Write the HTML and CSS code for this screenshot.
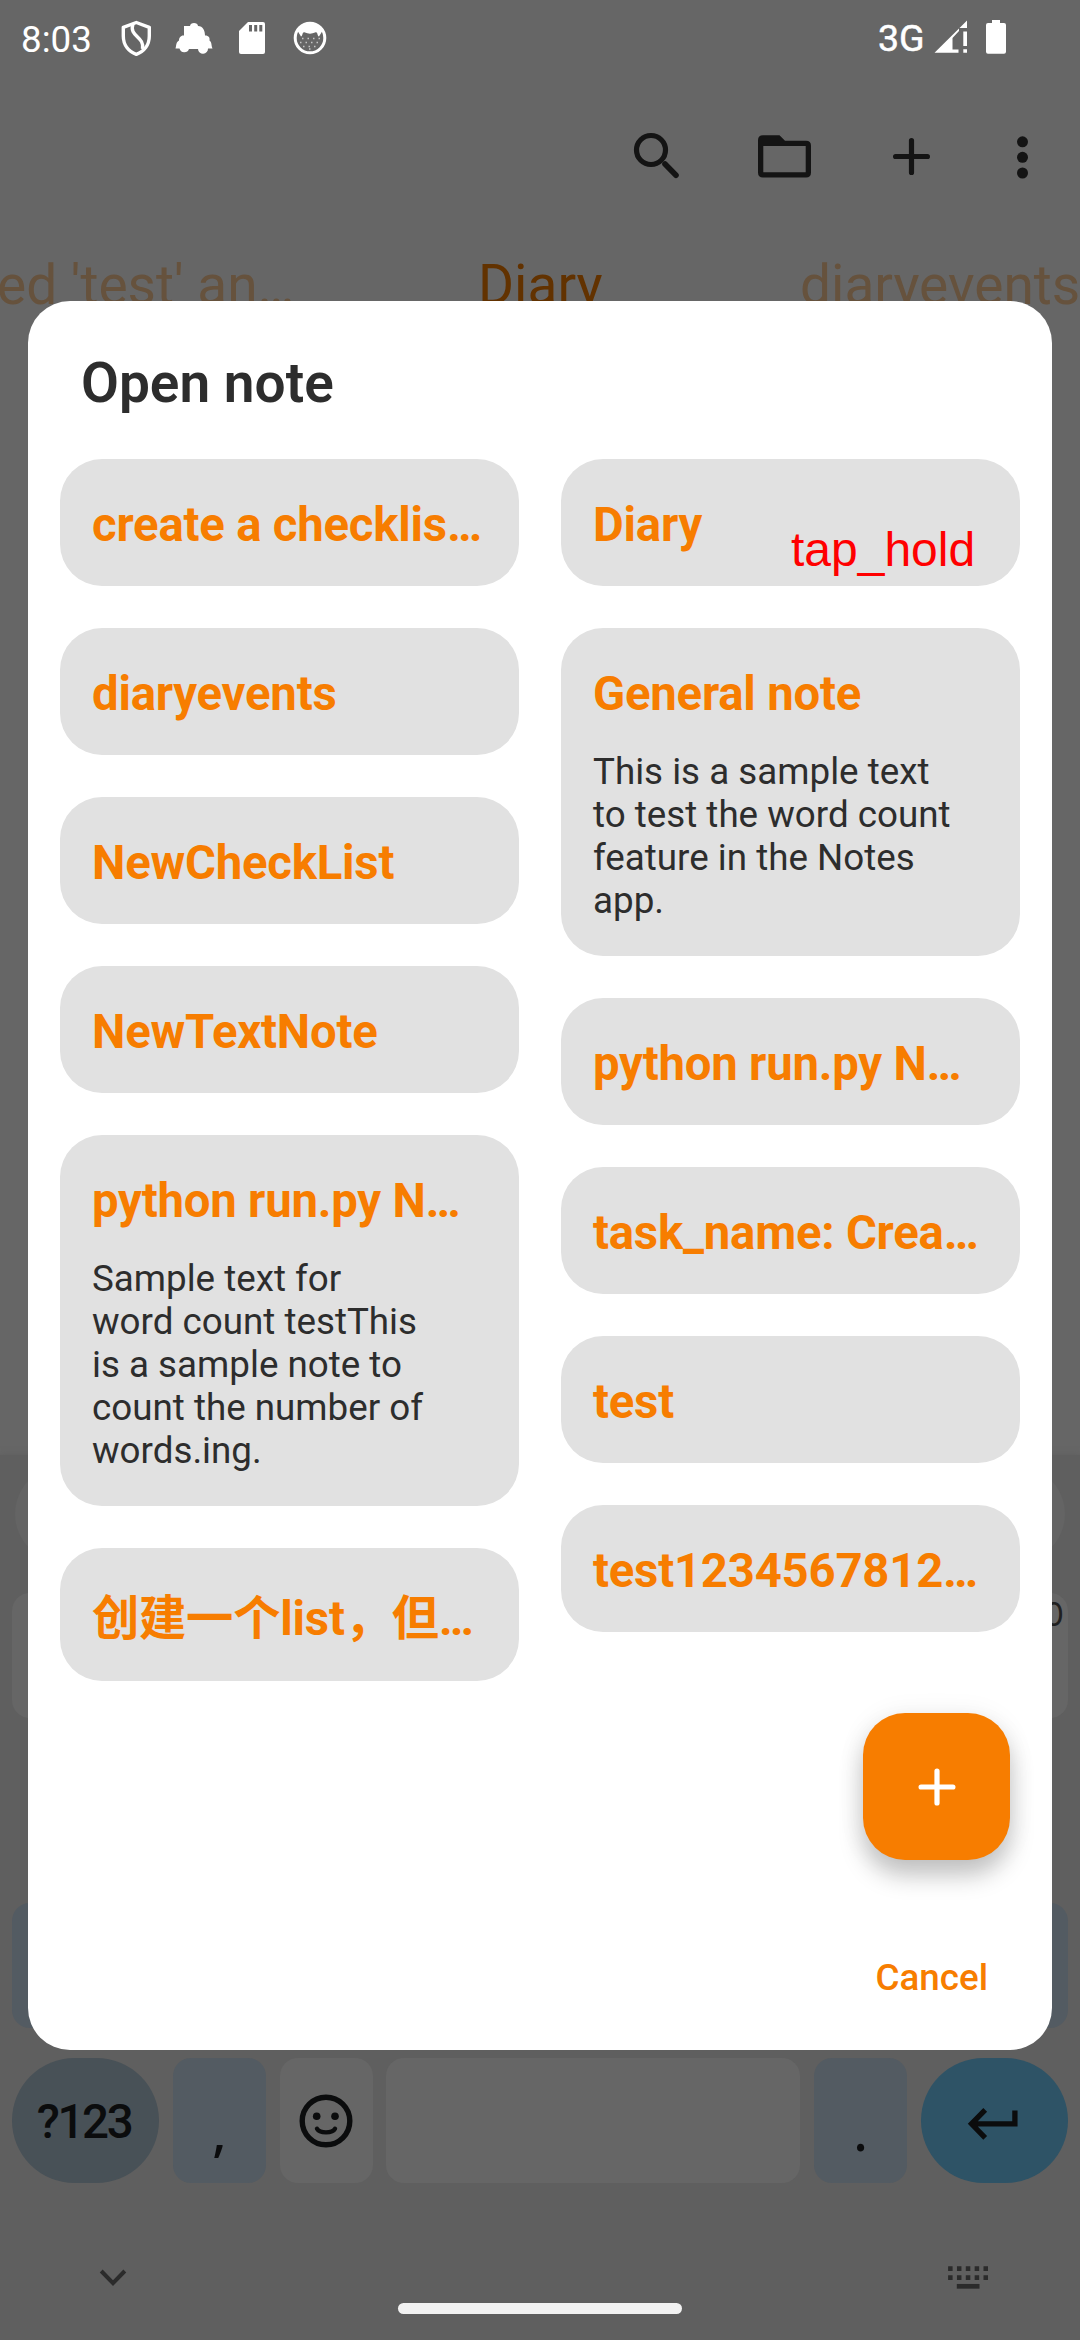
FILE: index.html
```html
<!DOCTYPE html>
<html lang="en">
<head>
<meta charset="utf-8">
<title>Open note</title>
<link rel="stylesheet" href="styles.css">
</head>
<body>
<div class="screen">
  <header class="status">
    <span class="clock">8:03</span>
    <svg class="status-icon" width="48" height="80" viewBox="112 0 48 80" fill="none" stroke="#fff" stroke-width="3.4" stroke-linejoin="round"><path d="M136.3 22.5L149.3 27.3V36C149.3 45 144 51.500 136.300 54.300C128.600 51.500 123.300 45 123.300 36V27.300Z"/><path d="M133 24C128.500 36.500 145 36.500 142.500 49"/></svg>
    <svg class="status-icon" width="48" height="80" viewBox="170 0 48 80" fill="#fff"><path d="M184 26H190C190 22 198 22 198 26C203 26 205 31 205 35.500C209 35.500 210 38 209.500 40.500C212 42 211 45 212.500 48.500H208A5 5 0 0 1 198 49H189A5 5 0 0 1 179.500 48.500H175.500C176.500 45 176 42 179 40.500C179 37.500 181 35 184 35.500Z"/></svg>
    <svg class="status-icon" width="48" height="80" viewBox="228 0 48 80"><path fill="#fff" d="M248 22H263Q265 22 265 24V52Q265 54 263 54H241Q239 54 239 52V31Z"/><path stroke="#666" stroke-width="3" d="M250.500 25V31.500M255.700 25V31.500M260.800 25V31.500"/></svg>
    <svg class="status-icon" width="48" height="80" viewBox="286 0 48 80"><circle cx="310" cy="38" r="14.800" fill="none" stroke="#fff" stroke-width="3"/><path fill="#fff" d="M297 30C301 22 319 22 323 30L319 36.500C317 36 318 31 315 32.500C312 34 308 34 305 32.500C302 31 303 36 301 36.500Z"/><path stroke="#c4c4c4" stroke-width="1.500" stroke-dasharray="1.500 4" d="M302 38.500H320M300 42.500H321M303 46.500H318M309 49H314"/></svg>
    <span class="network">3G</span>
    <svg width="40" height="80" viewBox="930 0 40 80" fill="#fff"><path d="M934.500 52.700L959 28.500V31L952.500 38V49.500H958.500V52.700ZM967 20.500V28H959.500ZM963.300 31.500H967V46H963.300ZM963.300 49.300H967V52.700H963.300Z"/></svg>
    <svg width="40" height="80" viewBox="976 0 40 80" fill="#fff"><path d="M992 20H1000V23H1004Q1006 23 1006 25V51.700Q1006 53.700 1004 53.700H988Q986 53.700 986 51.700V25Q986 23 988 23H992Z"/></svg>
  </header>

  <nav class="toolbar">
    <svg class="tool" width="60" height="60" viewBox="626 126 60 60" fill="none" stroke="#141414" stroke-width="5.200" stroke-linecap="round"><circle cx="651" cy="150" r="14.500"/><path d="M665 164L676 175.300" stroke-width="5.600"/></svg>
    <svg class="tool tool-folder" width="60" height="60" viewBox="755 126 60 60"><path fill="#141414" fill-rule="evenodd" d="M763 135.300H779.500L785 140.700H806Q811 140.700 811 145.700V172.500Q811 177.500 806 177.500H763Q758 177.500 758 172.500V140.300Q758 135.300 763 135.300ZM763.300 146V172.200H805.700V146Z"/></svg>
    <svg class="tool tool-add" width="60" height="60" viewBox="882 126 60 60" stroke="#141414" stroke-width="5.200" stroke-linecap="round"><path d="M911.500 140.600V172.400M895.600 156.500H927.400"/></svg>
    <svg class="tool tool-more" width="60" height="60" viewBox="993 126 60 60" fill="#141414"><circle cx="1022.500" cy="141.800" r="5.500"/><circle cx="1022.500" cy="157.300" r="5.500"/><circle cx="1022.500" cy="173" r="5.500"/></svg>
  </nav>

  <div class="tabs">
    <span class="tab tab-prev">ed 'test' an…</span>
    <span class="tab tab-current">Diary</span>
    <span class="tab">diaryevents</span>
  </div>

  <section class="keyboard">
    <div class="suggestions"></div>
    <div class="key-row">
      <div class="key"></div>
      <div class="key key-p">0</div>
    </div>
    <div class="key-row key-row-shift">
      <div class="key key-alt"></div>
      <div class="key key-alt"></div>
    </div>
    <div class="key-row key-row-bottom">
      <div class="key key-symbols">?123</div>
      <div class="key key-alt key-punct">,</div>
      <div class="key key-emoji">
        <svg width="60" height="60" viewBox="295.500 2090.500 60 60" fill="none" stroke="#0b0c0d" stroke-linecap="round"><circle cx="325.500" cy="2120.500" r="23.800" stroke-width="5.400"/><path stroke-width="4.400" d="M316.500 2128.300C319 2133 332 2133 334.500 2128.300"/><g fill="#0b0c0d" stroke="none"><circle cx="316.200" cy="2115.700" r="3.800"/><circle cx="334.500" cy="2115.700" r="3.800"/></g></svg>
      </div>
      <div class="key key-space"></div>
      <div class="key key-alt key-punct">.</div>
      <div class="key key-enter">
        <svg width="60" height="60" viewBox="964.500 2090.500 60 60" fill="none" stroke="#0b0c0d" stroke-width="5.300"><path d="M1015.400 2110V2123.300H972M985.700 2109.300L972 2123.300L985.700 2137.300"/></svg>
      </div>
    </div>
    <div class="ime-bar">
      <svg width="40" height="40" viewBox="93 2256 40 40" fill="none" stroke="#2b2b2b" stroke-width="4"><path d="M101.200 2271L113 2283.200L124.800 2271"/></svg>
      <svg width="48" height="40" viewBox="943.500 2256 48 40" stroke="#2b2b2b" stroke-width="4.700"><path stroke-dasharray="4.500 4.350" d="M947.600 2268.700H988M947.600 2277.600H988"/><path d="M956.300 2286.300H979"/></svg>
    </div>
    <div class="home-bar"></div>
  </section>
</div>

<main class="dialog">
  <h1 class="dialog-title">Open note</h1>
  <div class="notes">
    <div class="column">
      <article class="note"><h2 class="note-title">create a checklis…</h2></article>
      <article class="note"><h2 class="note-title">diaryevents</h2></article>
      <article class="note"><h2 class="note-title">NewCheckList</h2></article>
      <article class="note"><h2 class="note-title">NewTextNote</h2></article>
      <article class="note"><h2 class="note-title">python run.py N…</h2><p class="note-text">Sample text for<br>word count testThis<br>is a sample note to<br>count the number of<br>words.ing.</p></article>
      <article class="note note-cjk"><h2 class="note-title" lang="zh-CN">创建一个list，但…</h2></article>
    </div>
    <div class="column">
      <article class="note"><h2 class="note-title">Diary</h2><span class="gesture">tap_hold</span></article>
      <article class="note"><h2 class="note-title">General note</h2><p class="note-text">This is a sample text<br>to test the word count<br>feature in the Notes<br>app.</p></article>
      <article class="note"><h2 class="note-title">python run.py N…</h2></article>
      <article class="note"><h2 class="note-title">task_name: Crea…</h2></article>
      <article class="note"><h2 class="note-title">test</h2></article>
      <article class="note"><h2 class="note-title">test1234567812…</h2></article>
    </div>
  </div>
  <button class="fab" aria-label="New note"><svg width="42" height="42" viewBox="-21 -21 42 42" stroke="#fff" stroke-width="5.200" stroke-linecap="round"><path d="M0 -15.900V15.900M-15.900 0H15.900"/></svg></button>
  <footer class="actions"><button class="cancel">Cancel</button></footer>
</main>
</body>
</html>
```
FILE: styles.css
```css
* { box-sizing: border-box; margin: 0; padding: 0; }
svg { display: block; flex: none; }
button { border: 0; background: none; font: inherit; }

body {
  position: relative;
  width: 1080px;
  height: 2340px;
  overflow: hidden;
  font-family: Roboto, "Noto Sans CJK SC", sans-serif;
}

.screen {
  display: flex;
  flex-direction: column;
  height: 2340px;
  background: #666;
}

.status {
  display: flex;
  height: 80px;
  padding-left: 21px;
  color: #fff;
  font-size: 36.75px;
  line-height: 79px;
}
.clock { width: 91px; }
.status-icon { margin-right: 10px; }
.network { width: 52px; margin-left: 534px; font-size: 37.5px; -webkit-text-stroke: 0.5px #fff; line-height: 76px; }
.status svg:last-child { margin-left: 6px; }

.toolbar { display: flex; height: 172px; padding: 46px 0 0 626px; }
.tool-folder { margin-left: 69px; }
.tool-add { margin-left: 67px; }
.tool-more { margin-left: 51px; }

.tabs {
  display: grid;
  grid-template-columns: 478px 322px 280px;
  font-size: 55px;
  line-height: 66px;
  white-space: nowrap;
  color: #66523d;
}
.tab-prev { margin-left: -3px; }
.tab-current { color: #623200; }

.keyboard {
  display: flex;
  flex-direction: column;
  height: 885px;
  margin-top: auto;
  padding: 11px 12px 0;
  background: #5f5f5f;
  box-shadow: 0 0 6px #5f5f5f;
  color: #0b0c0d;
}
.suggestions { height: 96px; margin: 0 3px 31px; border-radius: 48px; background: #646464; }
.key-row { display: flex; justify-content: space-between; height: 125px; }
.key-row-shift { margin-top: 185px; }
.key-row-bottom { margin-top: 30px; }
.key {
  display: flex;
  align-items: center;
  justify-content: center;
  width: 93px;
  border-radius: 18px;
  background: #666;
}
.key-p {
  align-items: flex-start;
  justify-content: flex-end;
  padding: 3px 4px 0 0;
  font: 32px/38px Inter, sans-serif;
  color: #202020;
}
.key-alt { background: #535b62; }
.key-symbols {
  width: 147px;
  padding: 2px 3px 0 0;
  border-radius: 62.5px;
  background: #485157;
  font-size: 47.5px;
  font-weight: 500;
  letter-spacing: -2.4px;
}
.key-punct { padding-top: 21px; font: 500 52px/60px "Noto Sans", sans-serif; }
.key-space { width: 414px; }
.key-enter { width: 147px; border-radius: 62.5px; background: #2e5366; }
.ime-bar {
  display: flex;
  justify-content: space-between;
  margin-top: 73px;
  padding: 0 76px 0 81px;
}
.home-bar { width: 284px; height: 11px; margin: 7px auto 0; border-radius: 5.5px; background: #f2f2f2; }

.dialog {
  position: absolute;
  left: 28px;
  top: 301px;
  display: flex;
  flex-direction: column;
  width: 1024px;
  height: 1749px;
  padding: 0 32px;
  border-radius: 42px;
  background: #fff;
}
.dialog-title {
  height: 158px;
  padding: 50px 0 0 21px;
  font-size: 55px;
  font-weight: 600;
  line-height: 64px;
  color: #2d2d2d;
}
.notes { display: grid; grid-template-columns: 459px 459px; gap: 42px; }
.column { display: flex; flex-direction: column; gap: 42px; }
.note {
  position: relative;
  padding: 35px 32px 29px;
  border-radius: 42px;
  background: #e1e1e1;
}
.note-title {
  font-size: 47.25px;
  font-weight: 700;
  line-height: 63px;
  letter-spacing: -0.2px;
  white-space: nowrap;
  color: #f77d00;
}
.note-cjk { padding-bottom: 30px; padding-top: 40px; }
.note-text {
  padding: 24px 0 5px;
  font-size: 36.75px;
  line-height: 43px;
  color: #2d2d2d;
}
.gesture {
  position: absolute;
  left: 230px;
  top: 63px;
  font: 48px/55px "Liberation Sans", Arial, sans-serif;
  color: #f00;
}
.fab {
  position: absolute;
  right: 42px;
  bottom: 190px;
  display: flex;
  align-items: center;
  justify-content: center;
  width: 147px;
  height: 147px;
  border-radius: 42px;
  background: #f77d00;
  box-shadow: 0 16px 24px rgba(0, 0, 0, 0.22), 0 2px 28px rgba(0, 0, 0, 0.07);
}
.actions { display: flex; justify-content: flex-end; margin-top: auto; padding: 0 32px 46px 0; }
.cancel { font-size: 36.75px; font-weight: 500; line-height: 52px; color: #f77d00; }
```
